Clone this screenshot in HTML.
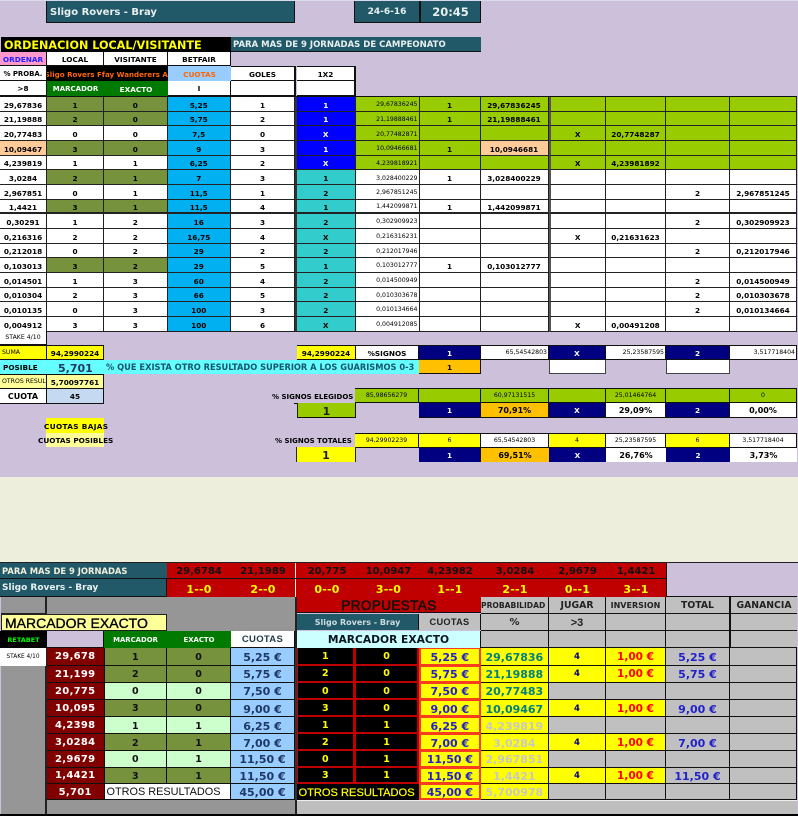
<!DOCTYPE html>
<html><head><meta charset="utf-8"><title>Sligo Rovers - Bray</title>
<style>
html,body{margin:0;padding:0;background:#ccc0da}
body{position:relative;width:798px;height:816px;overflow:hidden;font:bold 7.3px "DejaVu Sans",sans-serif;color:#000;filter:blur(.25px)}
*{box-sizing:border-box}
p{margin:0;padding-top:2px;line-height:1;display:flex;align-items:center;justify-content:center;white-space:nowrap;overflow:hidden;min-width:0}
.a{position:absolute}
.d{border-right:1px solid #111;border-bottom:1px solid #111}
.grid{position:absolute;display:grid}
#top{left:0;top:96px;width:797px;grid-template-columns:47px 57px 63.5px 63.5px 64px 60.5px 64px 61px 68px 57.5px 60px 64px 67px;grid-auto-rows:14.66px;border-top:1px solid #111}
#top p{padding-top:3px;border-right:1px solid #222;border-bottom:1px solid #222;background:#fff}
#top .g{background:#9c0}
#top .o{background:#76923c}
#top .b{background:#00b0f0}
#top .B{background:#00f;color:#fff;border-left:2px solid #333}
#top .t{background:#3cc;border-left:2px solid #333}
#top .r{background:#fc9}
#top .v{font:6.2px "DejaVu Sans",sans-serif;line-height:1;justify-content:flex-end;padding-right:1px}
#top .x{border-left:2px solid #555}
#top .k{border-bottom:2px solid #222}
.nv{background:#000080;color:#fff}
.ye{background:#ff0}
.ly{background:#ff9}
.wh{background:#fff}
.gr{background:#9c0}
.or{background:#ffc000}
.te{background:#215968;color:#e8f0f0}
.rd{background:#c00000}
.lg{background:#c0c0c0}
.th{font:6.2px "DejaVu Sans",sans-serif;line-height:1}
.rt{justify-content:flex-end;padding-right:1px}
#bot{left:47px;top:648px;width:750px;grid-template-columns:57.5px 62.5px 64px 64px 1.5px 58.5px 64px 61.7px 68.3px 57px 60px 64px 67px;grid-template-rows:17.7px 17px 17.3px 17.3px 17px 17px 16.4px 16.4px 16.3px;font-size:10px}
#bot p{border-right:1px solid #111;border-bottom:1px solid #111}
#bot .m{background:#800000;color:#fff;letter-spacing:.3px}
#bot .o{background:#76923c;font-size:9.5px;color:#111}
#bot .l{background:#cfc;font-size:9.5px;color:#111}
#bot .c{background:#9cf;color:#1f3864;font-size:11px}
#bot .s{background:#333;border:0}
#bot .n{background:#000;color:#ff0;border:2px solid #c00000;border-left-width:1px;border-top-width:0;font-size:9.5px}
#bot .q{background:#ff0;color:#2222cc;border:2px solid #f63e1e;border-top-width:1px;font-size:11px}
#bot .y1{background:#ff0;color:#008080;font-size:11px}
#bot .y2{background:#ff0;color:#c8c8c8;font-size:11px}
#bot .j{background:#ff0;color:#000080;font-size:8.5px}
#bot .i{background:#ff0;color:#f00;font-size:10.5px}
#bot .t{background:#c0c0c0;color:#22c;font-size:11px}
#bot .e{background:#c0c0c0}
.hd{display:flex;position:absolute;left:167px;width:499px;background:#c00000}
.hd p{height:100%}
</style></head><body>

<!-- top banners -->
<div class="a" style="left:0;top:0;width:798px;height:1px;background:#d9dbe8"></div>
<p class="a te" style="left:46px;top:1px;width:249px;height:22px;border-right:1px solid #111;border-bottom:1px solid #111;border-left:1px solid #111;justify-content:flex-start;padding-left:3px;font:bold 10px 'DejaVu Sans',sans-serif">Sligo Rovers - Bray</p>
<p class="a te" style="left:354px;top:1px;width:66px;height:22px;border:1px solid #111;border-top:0;font-size:9px">24-6-16</p>
<p class="a te" style="left:420px;top:1px;width:61px;height:22px;border:1px solid #111;border-top:0;font-size:11.5px">20:45</p>

<p class="a" style="left:1px;top:37px;width:230px;height:15px;background:#000;color:#ff0;justify-content:flex-start;padding-left:3px;font-size:11.2px">ORDENACION LOCAL/VISITANTE</p>
<p class="a te" style="left:231px;top:37px;width:250px;height:15px;justify-content:flex-start;padding-left:2px;font-size:8.5px;border-bottom:1px solid #111">PARA MAS DE 9 JORNADAS DE CAMPEONATO</p>

<p class="a d" style="left:0;top:52px;width:47px;height:14px;background:#f9c;color:#22f">ORDENAR</p>
<p class="a d wh" style="left:47px;top:52px;width:57px;height:14px">LOCAL</p>
<p class="a d wh" style="left:104px;top:52px;width:64px;height:14px">VISITANTE</p>
<p class="a d wh" style="left:168px;top:52px;width:63px;height:14px">BETFAIR</p>

<p class="a d wh" style="left:0;top:66px;width:47px;height:15px;font-size:6.9px">% PROBA.</p>
<p class="a" style="left:47px;top:66px;width:121px;height:15px;background:#000;color:#f60;font-size:7.1px">Sligo Rovers Ffay Wanderers Al</p>
<p class="a" style="left:168px;top:66px;width:63px;height:15px;background:#9cf;color:#f60">CUOTAS</p>
<p class="a d wh" style="left:231px;top:66px;width:65px;height:15px;border-right-width:2px;border-top:1px solid #111">GOLES</p>
<p class="a d wh" style="left:297px;top:66px;width:59px;height:15px;border-right-width:2px;border-top:1px solid #111">1X2</p>

<p class="a d wh" style="left:0;top:81px;width:47px;height:15px">&gt;8</p>
<p class="a" style="left:47px;top:81px;width:57px;height:15px;background:#007a00;color:#fff;font-size:7px">MARCADOR</p>
<p class="a" style="left:104px;top:81px;width:64px;height:15px;background:#007a00;color:#fff">EXACTO</p>
<p class="a d wh" style="left:168px;top:81px;width:63px;height:15px">I</p>
<p class="a d wh" style="left:231px;top:81px;width:65px;height:15px;border-right-width:2px"></p>
<p class="a d wh" style="left:297px;top:81px;width:59px;height:15px;border-right-width:2px"></p>

<!-- main data -->
<div id="top" class="grid">
<p>29,67836</p><p class="o">1</p><p class="o">0</p><p class="b">5,25</p><p>1</p><p class="B">1</p><p class="g v">29,67836245</p><p class="g">1</p><p class="g">29,67836245</p><p class="g x"></p><p class="g"></p><p class="g"></p><p class="g"></p>
<p>21,19888</p><p class="o">2</p><p class="o">0</p><p class="b">5,75</p><p>2</p><p class="B">1</p><p class="g v">21,19888461</p><p class="g">1</p><p class="g">21,19888461</p><p class="g x"></p><p class="g"></p><p class="g"></p><p class="g"></p>
<p>20,77483</p><p>0</p><p>0</p><p class="b">7,5</p><p>0</p><p class="B">X</p><p class="g v">20,77482871</p><p class="g"></p><p class="g"></p><p class="g x">X</p><p class="g">20,7748287</p><p class="g"></p><p class="g"></p>
<p class="r">10,09467</p><p class="o">3</p><p class="o">0</p><p class="b">9</p><p>3</p><p class="B">1</p><p class="g v">10,09466681</p><p class="g">1</p><p class="r">10,0946681</p><p class="g x"></p><p class="g"></p><p class="g"></p><p class="g"></p>
<p>4,239819</p><p>1</p><p>1</p><p class="b">6,25</p><p>2</p><p class="B">X</p><p class="g v">4,239818921</p><p class="g"></p><p class="g"></p><p class="g x">X</p><p class="g">4,23981892</p><p class="g"></p><p class="g"></p>
<p>3,0284</p><p class="o">2</p><p class="o">1</p><p class="b">7</p><p>3</p><p class="t">1</p><p class="v">3,028400229</p><p>1</p><p>3,028400229</p><p class="x"></p><p></p><p></p><p></p>
<p>2,967851</p><p>0</p><p>1</p><p class="b">11,5</p><p>1</p><p class="t">2</p><p class="v">2,967851245</p><p></p><p></p><p class="x"></p><p></p><p>2</p><p>2,967851245</p>
<p class="k">1,4421</p><p class="o k">3</p><p class="o k">1</p><p class="b k">11,5</p><p class="k">4</p><p class="t k">1</p><p class="v k">1,442099871</p><p class="k">1</p><p class="k">1,442099871</p><p class="x k"></p><p class="k"></p><p class="k"></p><p class="k"></p>
<p>0,30291</p><p>1</p><p>2</p><p class="b">16</p><p>3</p><p class="t">2</p><p class="v">0,302909923</p><p></p><p></p><p class="x"></p><p></p><p>2</p><p>0,302909923</p>
<p>0,216316</p><p>2</p><p>2</p><p class="b">16,75</p><p>4</p><p class="t">X</p><p class="v">0,216316231</p><p></p><p></p><p class="x">X</p><p>0,21631623</p><p></p><p></p>
<p>0,212018</p><p>0</p><p>2</p><p class="b">29</p><p>2</p><p class="t">2</p><p class="v">0,212017946</p><p></p><p></p><p class="x"></p><p></p><p>2</p><p>0,212017946</p>
<p>0,103013</p><p class="o">3</p><p class="o">2</p><p class="b">29</p><p>5</p><p class="t">1</p><p class="v">0,103012777</p><p>1</p><p>0,103012777</p><p class="x"></p><p></p><p></p><p></p>
<p>0,014501</p><p>1</p><p>3</p><p class="b">60</p><p>4</p><p class="t">2</p><p class="v">0,014500949</p><p></p><p></p><p class="x"></p><p></p><p>2</p><p>0,014500949</p>
<p>0,010304</p><p>2</p><p>3</p><p class="b">66</p><p>5</p><p class="t">2</p><p class="v">0,010303678</p><p></p><p></p><p class="x"></p><p></p><p>2</p><p>0,010303678</p>
<p>0,010135</p><p>0</p><p>3</p><p class="b">100</p><p>3</p><p class="t">2</p><p class="v">0,010134664</p><p></p><p></p><p class="x"></p><p></p><p>2</p><p>0,010134664</p>
<p>0,004912</p><p>3</p><p>3</p><p class="b">100</p><p>6</p><p class="t">X</p><p class="v">0,004912085</p><p></p><p></p><p class="x">X</p><p>0,00491208</p><p></p><p></p>
</div>

<!-- summary -->
<p class="a d wh th" style="left:0;top:331px;width:47px;height:14px">STAKE 4/10</p>
<p class="a d ye th" style="left:0;top:345px;width:47px;height:15px;justify-content:flex-start;padding-left:2px;border-top:1px solid #111">SUMA</p>
<p class="a d ye" style="left:47px;top:345px;width:57px;height:15px;border-top:1px solid #111">94,2990224</p>
<p class="a d ye" style="left:297px;top:345px;width:59px;height:15px;border-top:1px solid #111">94,2990224</p>
<p class="a d wh" style="left:356px;top:345px;width:63px;height:15px;border-top:1px solid #111">%SIGNOS</p>
<p class="a d nv" style="left:419px;top:345px;width:62px;height:15px;border-top:1px solid #111">1</p>
<p class="a d wh th rt" style="left:481px;top:345px;width:68px;height:15px;border-top:1px solid #111">65,54542803</p>
<p class="a d nv" style="left:549px;top:345px;width:57px;height:15px;border-top:1px solid #111">X</p>
<p class="a d wh th rt" style="left:606px;top:345px;width:60px;height:15px;border-top:1px solid #111">25,23587595</p>
<p class="a d nv" style="left:666px;top:345px;width:64px;height:15px;border-top:1px solid #111">2</p>
<p class="a d wh th rt" style="left:730px;top:345px;width:67px;height:15px;border-top:1px solid #111">3,517718404</p>

<div class="a" style="left:0;top:360px;width:419px;height:14px;background:#6ff"></div>
<p class="a" style="left:3px;top:360px;height:14px">POSIBLE</p>
<p class="a" style="left:58px;top:360px;height:14px;font-size:11px;color:#1f3864">5,701</p>
<p class="a" style="left:106px;top:360px;height:14px;font:bold 9.2px 'DejaVu Sans Condensed','Liberation Sans',sans-serif;line-height:1;color:#17566b">% QUE EXISTA OTRO RESULTADO SUPERIOR A LOS GUARISMOS 0-3</p>
<p class="a d or" style="left:419px;top:360px;width:62px;height:14px">1</p>
<p class="a wh" style="left:549px;top:360px;width:57px;height:14px;border:1px solid #444;border-top:0"></p>
<p class="a wh" style="left:666px;top:360px;width:64px;height:14px;border:1px solid #444;border-top:0"></p>

<p class="a d ly th" style="left:0;top:374px;width:47px;height:15px;justify-content:flex-start;padding-left:2px;border-top:1px solid #111">OTROS RESUL</p>
<p class="a d ly" style="left:47px;top:374px;width:57px;height:15px;border-top:1px solid #111">5,70097761</p>
<p class="a d wh" style="left:0;top:389px;width:47px;height:15px;font-size:8px">CUOTA</p>
<p class="a d" style="left:47px;top:389px;width:57px;height:15px;background:#c5d9f1">45</p>

<p class="a" style="left:272px;top:389px;height:14px;font-size:7px">% SIGNOS ELEGIDOS</p>
<div class="a" style="left:294px;top:403px;width:62px;height:1px;background:#111"></div>
<p class="a d gr th" style="left:355px;top:388px;width:64px;height:15px;border-top:1px solid #111">85,98656279</p>
<p class="a d gr" style="left:419px;top:388px;width:62px;height:15px;border-top:1px solid #111"></p>
<p class="a d gr th" style="left:481px;top:388px;width:68px;height:15px;border-top:1px solid #111">60,97131515</p>
<p class="a d gr" style="left:549px;top:388px;width:57px;height:15px;border-top:1px solid #111"></p>
<p class="a d gr th" style="left:606px;top:388px;width:60px;height:15px;border-top:1px solid #111">25,01464764</p>
<p class="a d gr" style="left:666px;top:388px;width:64px;height:15px;border-top:1px solid #111"></p>
<p class="a d gr th" style="left:730px;top:388px;width:67px;height:15px;border-top:1px solid #111">0</p>

<p class="a d gr" style="left:297px;top:403px;width:59px;height:15px;font-size:11px;color:#222;border-left:1px solid #222">1</p>
<p class="a d nv" style="left:419px;top:403px;width:62px;height:15px">1</p>
<p class="a d or" style="left:481px;top:403px;width:68px;height:15px;font-size:8px">70,91%</p>
<p class="a d nv" style="left:549px;top:403px;width:57px;height:15px">X</p>
<p class="a d wh" style="left:606px;top:403px;width:60px;height:15px;font-size:8px">29,09%</p>
<p class="a d nv" style="left:666px;top:403px;width:64px;height:15px">2</p>
<p class="a d wh" style="left:730px;top:403px;width:67px;height:15px;font-size:8px">0,00%</p>

<div class="a ye" style="left:46px;top:418px;width:58px;height:15px"></div>
<div class="a ly" style="left:46px;top:433px;width:58px;height:14px"></div>
<p class="a" style="left:44px;top:418px;height:15px;letter-spacing:.35px">CUOTAS BAJAS</p>
<p class="a" style="left:38px;top:433px;height:14px">CUOTAS POSIBLES</p>

<p class="a" style="left:275px;top:433px;height:15px;font-size:7px">% SIGNOS TOTALES</p>
<p class="a d ye th" style="left:355px;top:433px;width:64px;height:15px;border-top:1px solid #111">94,29902239</p>
<p class="a d ye th" style="left:419px;top:433px;width:62px;height:15px;border-top:1px solid #111">6</p>
<p class="a d wh th" style="left:481px;top:433px;width:68px;height:15px;border-top:1px solid #111">65,54542803</p>
<p class="a d ye th" style="left:549px;top:433px;width:57px;height:15px;border-top:1px solid #111">4</p>
<p class="a d wh th" style="left:606px;top:433px;width:60px;height:15px;border-top:1px solid #111">25,23587595</p>
<p class="a d ye th" style="left:666px;top:433px;width:64px;height:15px;border-top:1px solid #111">6</p>
<p class="a d wh th" style="left:730px;top:433px;width:67px;height:15px;border-top:1px solid #111">3,517718404</p>

<p class="a ye" style="left:296px;top:447px;width:60px;height:15px;font-size:11px;color:#222;border-left:1px solid #222;border-right:1px solid #222">1</p>
<p class="a nv" style="left:419px;top:448px;width:62px;height:14px;border-right:1px solid #111">1</p>
<p class="a or" style="left:481px;top:448px;width:68px;height:14px;font-size:8px">69,51%</p>
<p class="a nv" style="left:549px;top:448px;width:57px;height:14px">X</p>
<p class="a wh" style="left:606px;top:448px;width:60px;height:14px;font-size:8px">26,76%</p>
<p class="a nv" style="left:666px;top:448px;width:64px;height:14px">2</p>
<p class="a wh" style="left:730px;top:448px;width:67px;height:14px;font-size:8px">3,73%</p>

<!-- cream gap -->
<div class="a" style="left:0;top:477px;width:798px;height:85px;background:#eeeedd"></div>
<div class="a" style="left:0;top:562px;width:798px;height:1px;background:#222"></div>

<!-- lower header -->
<p class="a te" style="left:0;top:563px;width:167px;height:16px;justify-content:flex-start;padding-left:2px;font-size:8.4px;border-bottom:1px solid #111;color:#f4f0dc">PARA MAS DE 9 JORNADAS</p>
<p class="a te" style="left:0;top:579px;width:167px;height:18px;justify-content:flex-start;padding-left:2px;font-size:9px;border-bottom:1px solid #111;border-right:1px solid #111">Sligo Rovers - Bray</p>

<div class="hd" style="top:563px;height:16px;font-size:10px;color:#111;border-bottom:1px solid #111">
<p style="width:64px">29,6784</p><p style="width:64px">21,1989</p><p style="width:63px;border-left:1px solid #fff">20,775</p><p style="width:61px">10,0947</p><p style="width:62px">4,23982</p><p style="width:68px">3,0284</p><p style="width:57px">2,9679</p><p style="width:60px">1,4421</p></div>
<div class="hd" style="top:579px;height:18px;font-size:11px;letter-spacing:.2px;color:#ff0">
<p style="width:64px">1--0</p><p style="width:64px">2--0</p><p style="width:63px;border-left:1px solid #fff">0--0</p><p style="width:61px">3--0</p><p style="width:62px">1--1</p><p style="width:68px">2--1</p><p style="width:57px">0--1</p><p style="width:60px">3--1</p></div>
<div class="a" style="left:666px;top:563px;width:131px;height:34px;background:#ccc0da;border-left:1px solid #111;border-bottom:1px solid #111"></div>

<!-- lower left gray blocks -->
<div class="a" style="left:0;top:597px;width:296px;height:51px;background:#969696"></div>
<div class="a" style="left:0;top:597px;width:47px;height:17px;border-right:2px solid #222;border-bottom:1px solid #222"></div>
<div class="a" style="left:0;top:648px;width:47px;height:166px;background:#969696;border-right:2px solid #222"></div>
<div class="a" style="left:0;top:597px;width:1px;height:217px;background:#ccc0da"></div>
<div class="a" style="left:47px;top:800px;width:249px;height:14px;background:#969696"></div>
<div class="a" style="left:296px;top:800px;width:501px;height:14px;background:#bebebe;border-top:1px solid #eee"></div>
<div class="a" style="left:0;top:814px;width:798px;height:2px;background:#000"></div>
<div class="a" style="left:295px;top:597px;width:2px;height:217px;background:#222"></div>

<p class="a ly" style="left:1px;top:614px;width:166px;height:16.5px;border:1px solid #222;justify-content:flex-start;padding-left:3px;font:14px 'Liberation Sans',sans-serif;line-height:1;-webkit-text-stroke:.35px #000">MARCADOR EXACTO</p>

<p class="a" style="left:0;top:631px;width:47px;height:17px;background:#000;color:#0f0;font-size:6.5px">RETABET</p>
<p class="a d" style="left:47px;top:631px;width:57px;height:17px;background:#ccc0da"></p>
<p class="a" style="left:104px;top:631px;width:63px;height:17px;background:#007a00;color:#fff;font-size:6.9px">MARCADOR</p>
<p class="a" style="left:167px;top:631px;width:64px;height:17px;background:#007a00;color:#fff;font-size:6.9px">EXACTO</p>
<p class="a d wh" style="left:231px;top:631px;width:64px;height:17px;font:bold 9.5px 'Liberation Sans',sans-serif;line-height:1;color:#1f3a4a;letter-spacing:.3px">CUOTAS</p>
<p class="a wh th" style="left:0;top:648px;width:46px;height:17.7px;font-size:5.8px">STAKE 4/10</p>

<!-- propuestas header -->
<p class="a rd" style="left:297px;top:597px;width:184px;height:16px;font:13.5px 'Liberation Sans',sans-serif;line-height:1;letter-spacing:.4px;-webkit-text-stroke:.5px #111;color:#111;border-bottom:1px solid #111">PROPUESTAS</p>
<p class="a te" style="left:297px;top:614px;width:122px;height:16px;font:bold 8px 'DejaVu Sans',sans-serif;line-height:1;color:#ccdde2;border-right:1px solid #111">Sligo Rovers - Bray</p>
<p class="a lg" style="left:419px;top:614px;width:62px;height:16px;font:bold 9.2px 'Liberation Sans',sans-serif;line-height:1;color:#222;border-right:1px solid #111;letter-spacing:.3px">CUOTAS</p>
<p class="a" style="left:297px;top:631px;width:184px;height:17px;background:#cff;font-size:10.7px;color:#0b1520;border-right:1px solid #111">MARCADOR EXACTO</p>

<div class="a" style="left:481px;top:597px;width:316px;height:51px;background:#111"></div>
<p class="a lg" style="left:481px;top:597px;width:67px;height:16px;font-size:7.6px;color:#222;justify-content:flex-start">PROBABILIDAD</p>
<p class="a lg" style="left:549px;top:597px;width:56px;height:16px;font-size:9.3px;color:#222">JUGAR</p>
<p class="a lg" style="left:606px;top:597px;width:59px;height:16px;font-size:8px;color:#222">INVERSION</p>
<p class="a lg" style="left:666px;top:597px;width:63px;height:16px;font-size:9.3px;color:#222">TOTAL</p>
<p class="a lg" style="left:731px;top:597px;width:66px;height:16px;font-size:9.3px;color:#222">GANANCIA</p>
<p class="a lg" style="left:481px;top:614px;width:67px;height:16px;font-size:10px;color:#222">%</p>
<p class="a lg" style="left:549px;top:614px;width:56px;height:16px;font:bold 11px 'Liberation Sans',sans-serif;line-height:1;color:#222">&gt;3</p>
<p class="a lg" style="left:606px;top:614px;width:59px;height:16px"></p>
<p class="a lg" style="left:666px;top:614px;width:63px;height:16px"></p>
<p class="a lg" style="left:731px;top:614px;width:66px;height:16px"></p>
<p class="a lg" style="left:481px;top:631px;width:67px;height:16px"></p>
<p class="a lg" style="left:549px;top:631px;width:56px;height:16px"></p>
<p class="a lg" style="left:606px;top:631px;width:59px;height:16px"></p>
<p class="a lg" style="left:666px;top:631px;width:63px;height:16px"></p>
<p class="a lg" style="left:731px;top:631px;width:66px;height:16px"></p>

<!-- lower data -->
<div id="bot" class="grid">
<p class="m">29,678</p><p class="o">1</p><p class="o">0</p><p class="c">5,25 €</p><p class="s"></p><p class="n">1</p><p class="n">0</p><p class="q">5,25 €</p><p class="y1">29,67836</p><p class="j">4</p><p class="i">1,00 €</p><p class="t">5,25 €</p><p class="e"></p>
<p class="m">21,199</p><p class="o">2</p><p class="o">0</p><p class="c">5,75 €</p><p class="s"></p><p class="n">2</p><p class="n">0</p><p class="q">5,75 €</p><p class="y1">21,19888</p><p class="j">4</p><p class="i">1,00 €</p><p class="t">5,75 €</p><p class="e"></p>
<p class="m">20,775</p><p class="l">0</p><p class="l">0</p><p class="c">7,50 €</p><p class="s"></p><p class="n">0</p><p class="n">0</p><p class="q">7,50 €</p><p class="y1">20,77483</p><p class="e"></p><p class="e"></p><p class="e"></p><p class="e"></p>
<p class="m">10,095</p><p class="o">3</p><p class="o">0</p><p class="c">9,00 €</p><p class="s"></p><p class="n">3</p><p class="n">0</p><p class="q">9,00 €</p><p class="y1">10,09467</p><p class="j">4</p><p class="i">1,00 €</p><p class="t">9,00 €</p><p class="e"></p>
<p class="m">4,2398</p><p class="l">1</p><p class="l">1</p><p class="c">6,25 €</p><p class="s"></p><p class="n">1</p><p class="n">1</p><p class="q">6,25 €</p><p class="y2">4,239819</p><p class="e"></p><p class="e"></p><p class="e"></p><p class="e"></p>
<p class="m">3,0284</p><p class="o">2</p><p class="o">1</p><p class="c">7,00 €</p><p class="s"></p><p class="n">2</p><p class="n">1</p><p class="q">7,00 €</p><p class="y2">3,0284</p><p class="j">4</p><p class="i">1,00 €</p><p class="t">7,00 €</p><p class="e"></p>
<p class="m">2,9679</p><p class="l">0</p><p class="l">1</p><p class="c">11,50 €</p><p class="s"></p><p class="n">0</p><p class="n">1</p><p class="q">11,50 €</p><p class="y2">2,967851</p><p class="e"></p><p class="e"></p><p class="e"></p><p class="e"></p>
<p class="m">1,4421</p><p class="o">3</p><p class="o">1</p><p class="c">11,50 €</p><p class="s"></p><p class="n">3</p><p class="n">1</p><p class="q">11,50 €</p><p class="y2">1,4421</p><p class="j">4</p><p class="i">1,00 €</p><p class="t">11,50 €</p><p class="e"></p>
<p class="m">5,701</p><p class="wh" style="grid-column:span 2;font:10.9px 'Liberation Sans',sans-serif;line-height:1;color:#111;justify-content:flex-start;padding-left:2px">OTROS RESULTADOS</p><p class="c">45,00 €</p><p class="s"></p><p style="grid-column:span 2;background:#000;color:#ff0;font:11.1px 'Liberation Sans',sans-serif;line-height:1;-webkit-text-stroke:.2px #ff0;justify-content:flex-start;padding-left:2px;border:0">OTROS RESULTADOS</p><p class="q">45,00 €</p><p class="y2">5,700978</p><p class="e"></p><p class="e"></p><p class="e"></p><p class="e"></p>
</div>
</body></html>
